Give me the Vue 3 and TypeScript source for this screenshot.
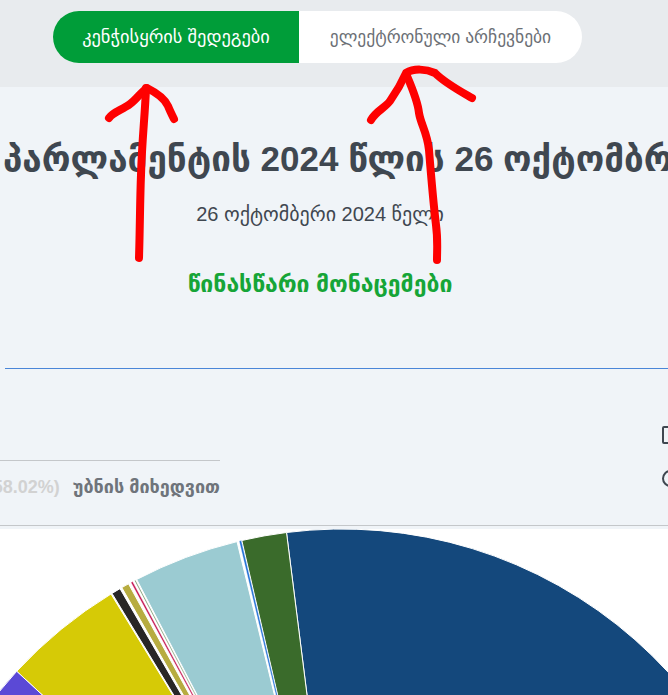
<script setup lang="ts">
const cx = 342
const cy = 443
const r = 443
type Slice = { from: number; to: number; color: string }
const slices: Slice[] = [
  { from: 286.5, to: 900, color: '#14487c' },
  { from: 241.8, to: 286.5, color: '#3a6b2b' },
  { from: 239.2, to: 241.3, color: '#1f6fd6' },
  { from: 136.7, to: 237, color: '#9bcbd2' },
  { from: 134.6, to: 135.4, color: '#3c6b2c' },
  { from: 131, to: 132.6, color: '#c4124f' },
  { from: 121.8, to: 128.5, color: '#b7ac40' },
  { from: 112, to: 120, color: '#282626' },
  { from: 16.7, to: 111, color: '#d6ca06' },
  { from: -60, to: 16.7, color: '#5b49d6' },
]
function angle(x: number): number {
  const d = (x - cx) / r
  return Math.asin(Math.max(-1, Math.min(1, d)))
}
function point(a: number): string {
  return `${(cx + r * Math.sin(a)).toFixed(2)} ${(cy - r * Math.cos(a)).toFixed(2)}`
}
function path(s: Slice): string {
  return `M${cx} ${cy}L${point(angle(s.from))}A${r} ${r} 0 0 1 ${point(angle(s.to))}Z`
}
const wedges = slices.map((s) => ({ d: path(s), color: s.color, thin: s.to - s.from < 3 }))
</script>

<template>
  <div class="page">
    <header class="top">
      <nav class="tabs">
        <a class="tab active">კენჭისყრის შედეგები</a>
        <a class="tab">ელექტრონული არჩევნები</a>
      </nav>
    </header>
    <section class="intro">
      <div class="center">
        <h1>საქართველოს პარლამენტის 2024 წლის 26 ოქტომბრის არჩევნები</h1>
        <p class="date">26 ოქტომბერი 2024 წელი</p>
        <p class="prelim">წინასწარი მონაცემები</p>
      </div>
      <hr class="rule" />
      <div class="filters">
        <div class="turnout">
          <span class="pct">(58.02%)</span>
          <span class="by">უბნის მიხედვით</span>
        </div>
        <div class="controls">
          <span class="check"></span>
          <span class="radio"></span>
        </div>
      </div>
    </section>
    <section class="chart">
      <svg class="pie" width="668" height="169" viewBox="0 0 668 169" aria-hidden="true">
        <path
          v-for="(w, i) in wedges"
          :key="i"
          :d="w.d"
          :fill="w.color"
          stroke="#fff"
          :stroke-width="w.thin ? 0.4 : 1"
        />
      </svg>
    </section>
    <svg class="marks" width="668" height="695" viewBox="0 0 668 695" aria-hidden="true">
      <path d="M139 258 C140 225 140 200 141 175 C142 140 145 115 146 88" />
      <path d="M109 118 C113 112 122 110 130 104 C137 99 141 92 147 88 C155 92 165 99 168 106 C170 111 172 115 174 119" />
      <path d="M371 120 C376 111 385 108 390 101 C397 91 402 82 406 73 C414 68 426 69 435 73 C445 83 458 90 472 98" />
      <path d="M407 76 C413 90 418 103 419 113 C421 125 427 132 429 150 C431 175 433 200 436 225 C438 240 437 250 437 260" />
    </svg>
  </div>
</template>

<style>
html,
body {
  margin: 0;
  overflow: hidden;
  background: #fff;
}
</style>

<style scoped>
.page {
  position: relative;
  width: 668px;
  height: 695px;
  overflow: hidden;
  background: #f0f4f8;
  font-family: "Liberation Sans", "DejaVu Sans", sans-serif;
  color: #3f4750;
}
.top {
  height: 87px;
  box-sizing: border-box;
  padding: 11px 0 0 53px;
  background: #e8ebee;
}
.tabs {
  display: flex;
  width: 529px;
  height: 52px;
  overflow: hidden;
  border-radius: 26px;
  background: #fff;
}
.tab {
  display: flex;
  flex: 0 0 auto;
  align-items: center;
  justify-content: center;
  font-size: 17.5px;
  color: #6b6f75;
}
.tab:first-child {
  width: 246px;
}
.tab:last-child {
  width: 283px;
}
.tab.active {
  background: #009d39;
  font-size: 18.4px;
  color: #fff;
}
.intro {
  height: 439px;
  box-sizing: border-box;
  border-bottom: 1px solid #c4c7ca;
}
.center {
  display: flex;
  flex-direction: column;
  align-items: center;
  width: 640px;
}
h1 {
  margin: 52px 0 0;
  font-size: 35px;
  line-height: 40px;
  font-weight: 700;
  white-space: nowrap;
}
.date {
  margin: 23px 0 0;
  font-size: 20px;
  line-height: 24px;
}
.prelim {
  margin: 45px 0 0;
  font-size: 23px;
  line-height: 26px;
  font-weight: 700;
  color: #16a537;
}
.rule {
  height: 1px;
  margin: 71px 0 0 5px;
  border: 0;
  background: #4a86d8;
}
.filters {
  display: flex;
  justify-content: space-between;
}
.turnout {
  display: flex;
  align-items: center;
  justify-content: flex-end;
  gap: 13px;
  width: 220px;
  height: 52px;
  margin-top: 91px;
  border-top: 1px solid #c4c7ca;
  font-size: 18px;
  font-weight: 700;
  white-space: nowrap;
}
.pct {
  color: #d2d2d2;
}
.by {
  color: #6f747b;
}
.controls {
  display: flex;
  flex-direction: column;
  gap: 26px;
  width: 6px;
  padding-top: 57px;
}
.check {
  flex: none;
  width: 18px;
  height: 18px;
  box-sizing: border-box;
  border: 2px solid #3f4750;
  border-radius: 2px;
}
.radio {
  flex: none;
  width: 17px;
  height: 17px;
  box-sizing: border-box;
  border: 2px solid #3f4750;
  border-radius: 50%;
}
.chart {
  height: 169px;
  background: #fff;
}
.pie {
  display: block;
  margin-top: 3px;
}
.marks {
  position: absolute;
  top: 0;
  left: 0;
  fill: none;
  stroke: #fe0000;
  stroke-width: 8;
  stroke-linecap: round;
  stroke-linejoin: round;
}
</style>
